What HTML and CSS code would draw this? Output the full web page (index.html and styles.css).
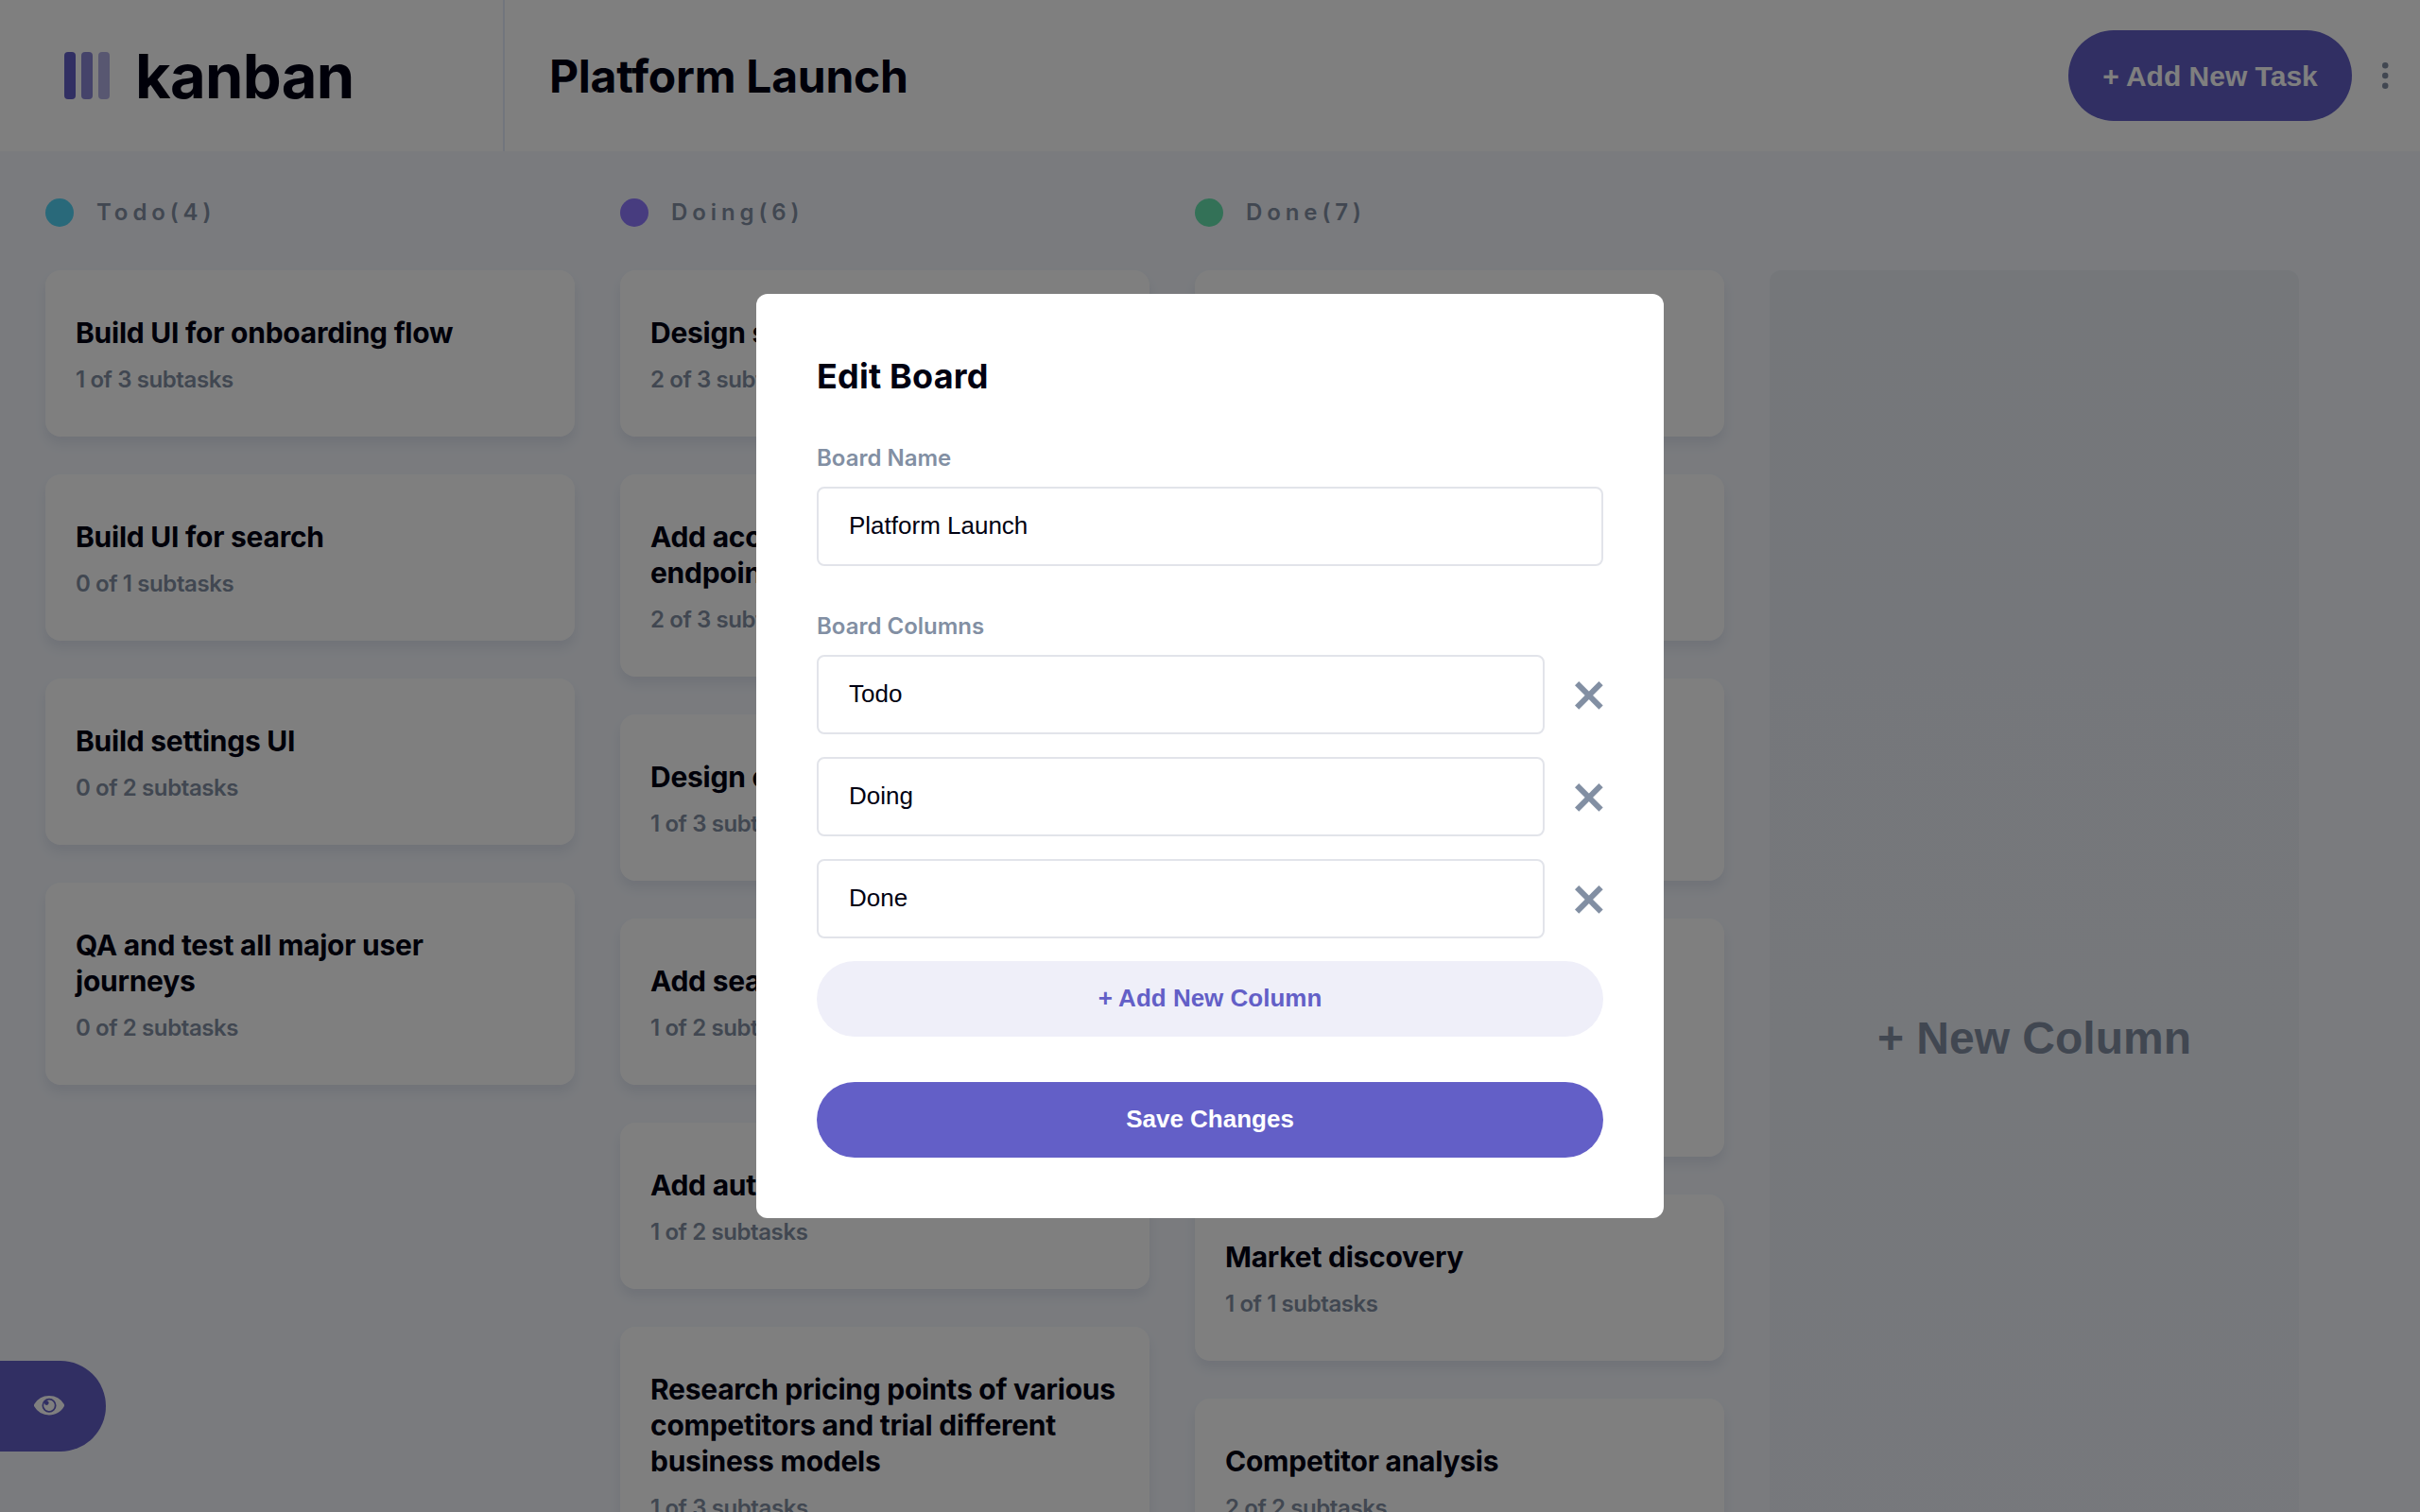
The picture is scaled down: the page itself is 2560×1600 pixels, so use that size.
FILE: index.html
```html
<!DOCTYPE html>
<html lang="en">
<head>
    <meta charset="UTF-8">
    <meta name="viewport" content="width=device-width, initial-scale=1.0">
    <title>Kanban</title>
    <link rel="stylesheet" href="styles.css">
</head>

<body>
    <header class="topbar">
        <div class="brand">
            <svg class="logo" width="48" height="50" viewBox="0 0 24 25">
                <rect width="6" height="25" rx="2" fill="#635FC7"/>
                <rect x="9" width="6" height="25" rx="2" fill="#635FC7" opacity=".75"/>
                <rect x="18" width="6" height="25" rx="2" fill="#635FC7" opacity=".5"/>
            </svg>
            <span class="brand-name">kanban</span>
        </div>
        <h1 class="board-title">Platform Launch</h1>
        <button class="add-task">+ Add New Task</button>
        <svg class="more" width="7" height="30" viewBox="0 0 5 20">
            <g fill="#828FA3">
                <circle cx="2.308" cy="2.308" r="2.308"/>
                <circle cx="2.308" cy="10" r="2.308"/>
                <circle cx="2.308" cy="17.692" r="2.308"/>
            </g>
        </svg>
    </header>

    <main class="board">
        <div class="columns">
            <section class="column">
                <h2 class="column-title"><span class="dot dot-todo"></span>Todo(4)</h2>
                <article class="card"><h3>Build UI for onboarding flow</h3><p>1 of 3 subtasks</p></article>
                <article class="card"><h3>Build UI for search</h3><p>0 of 1 subtasks</p></article>
                <article class="card"><h3>Build settings UI</h3><p>0 of 2 subtasks</p></article>
                <article class="card"><h3>QA and test all major user journeys</h3><p>0 of 2 subtasks</p></article>
            </section>

            <section class="column">
                <h2 class="column-title"><span class="dot dot-doing"></span>Doing(6)</h2>
                <article class="card"><h3>Design settings and search pages</h3><p>2 of 3 subtasks</p></article>
                <article class="card"><h3>Add account management endpoints</h3><p>2 of 3 subtasks</p></article>
                <article class="card"><h3>Design onboarding flow</h3><p>1 of 3 subtasks</p></article>
                <article class="card"><h3>Add search endpoints</h3><p>1 of 2 subtasks</p></article>
                <article class="card"><h3>Add authentication endpoints</h3><p>1 of 2 subtasks</p></article>
                <article class="card"><h3>Research pricing points of various competitors and trial different business models</h3><p>1 of 3 subtasks</p></article>
            </section>

            <section class="column">
                <h2 class="column-title"><span class="dot dot-done"></span>Done(7)</h2>
                <article class="card"><h3>Conduct 5 wireframe tests</h3><p>1 of 1 subtasks</p></article>
                <article class="card"><h3>Create wireframe prototype</h3><p>1 of 1 subtasks</p></article>
                <article class="card"><h3>Review results of usability tests and iterate</h3><p>3 of 3 subtasks</p></article>
                <article class="card"><h3>Create paper prototypes and conduct 10 usability tests with potential customers</h3><p>1 of 1 subtasks</p></article>
                <article class="card"><h3>Market discovery</h3><p>1 of 1 subtasks</p></article>
                <article class="card"><h3>Competitor analysis</h3><p>2 of 2 subtasks</p></article>
                <article class="card"><h3>Research the market</h3><p>2 of 2 subtasks</p></article>
            </section>

            <div class="new-column">+ New Column</div>
        </div>
    </main>

    <button class="show-sidebar">
        <svg width="32" height="22" viewBox="0 0 16 11">
            <path d="M15.815 4.434A9.055 9.055 0 0 0 8 0 9.055 9.055 0 0 0 .185 4.434a1.333 1.333 0 0 0 0 1.354A9.055 9.055 0 0 0 8 10.222c3.33 0 6.25-1.777 7.815-4.434a1.333 1.333 0 0 0 0-1.354ZM8 8.89A3.776 3.776 0 0 1 4.222 5.11 3.776 3.776 0 0 1 8 1.333a3.776 3.776 0 0 1 3.778 3.778A3.776 3.776 0 0 1 8 8.89Zm2.889-3.778a2.889 2.889 0 1 1-5.438-1.36 1.19 1.19 0 1 0 1.19-1.189H6.64a2.889 2.889 0 0 1 4.25 2.549Z" fill="#FFF"/>
        </svg>
    </button>

    <div class="overlay">
        <form class="modal">
            <h2 class="modal-title">Edit Board</h2>

            <label class="field-label">Board Name</label>
            <input class="field" value="Platform Launch"/>

            <label class="field-label field-label-columns">Board Columns</label>
            <div class="column-rows">
                <div class="column-row">
                    <input class="field" value="Todo"/>
                    <svg class="cross" width="30" height="30" viewBox="0 0 15 15">
                        <g fill="#828FA3"><path d="m12.728 0 2.122 2.122L2.122 14.85 0 12.728z"/><path d="M0 2.122 2.122 0 14.85 12.728l-2.122 2.122z"/></g>
                    </svg>
                </div>
                <div class="column-row">
                    <input class="field" value="Doing"/>
                    <svg class="cross" width="30" height="30" viewBox="0 0 15 15">
                        <g fill="#828FA3"><path d="m12.728 0 2.122 2.122L2.122 14.85 0 12.728z"/><path d="M0 2.122 2.122 0 14.85 12.728l-2.122 2.122z"/></g>
                    </svg>
                </div>
                <div class="column-row">
                    <input class="field" value="Done"/>
                    <svg class="cross" width="30" height="30" viewBox="0 0 15 15">
                        <g fill="#828FA3"><path d="m12.728 0 2.122 2.122L2.122 14.85 0 12.728z"/><path d="M0 2.122 2.122 0 14.85 12.728l-2.122 2.122z"/></g>
                    </svg>
                </div>
                <button type="button" class="pill pill-light">+ Add New Column</button>
            </div>

            <button type="button" class="pill pill-primary">Save Changes</button>
        </form>
    </div>
</body>
</html>
```

FILE: styles.css
```css
* {
    box-sizing: border-box;
}

html, body {
    height: 100%;
}

body {
    margin: 0;
    overflow: hidden;
    background-color: #F4F7FD;
    color: #000112;
    font-family: "Inter", "Liberation Sans", sans-serif;
}

button {
    border: none;
    cursor: pointer;
}

.topbar {
    display: flex;
    align-items: center;
    height: 160px;
    padding-right: 33px;
    background-color: #fff;
}

.brand {
    display: flex;
    align-items: center;
    gap: 27px;
    align-self: stretch;
    width: 534px;
    padding-left: 68px;
    border-right: 2px solid #E4EBFA;
}

.logo {
    flex: none;
}

.brand-name {
    font-size: 65px;
    font-weight: 700;
    line-height: 1;
    letter-spacing: -0.7px;
}

.board-title {
    flex: 1;
    margin: 0 0 0 47px;
    font-size: 48px;
    font-weight: 700;
    letter-spacing: -0.25px;
}

.add-task {
    height: 96px;
    width: 300px;
    padding: 2px 0 0;
    border-radius: 48px;
    background-color: #635FC7;
    color: #fff;
    font-family: "Liberation Sans", sans-serif;
    font-size: 30px;
    font-weight: 700;
}

.more {
    margin-left: 32px;
}

.board {
    height: 1440px;
    overflow: hidden;
    padding: 46px 0 0 48px;
}

.columns {
    display: flex;
    gap: 48px;
}

.column {
    width: 560px;
    flex: none;
    display: flex;
    flex-direction: column;
    gap: 40px;
    padding-bottom: 38px;
}

.column-title {
    display: flex;
    align-items: center;
    gap: 24px;
    height: 36px;
    margin: 0 0 4px;
    color: #828FA3;
    font-size: 24px;
    font-weight: 600;
    letter-spacing: 4.9px;
}

.dot {
    width: 30px;
    height: 30px;
    margin-top: 2px;
    border-radius: 50%;
}

.dot-todo {
    background-color: #52D2F5;
}

.dot-doing {
    background-color: #8E78FF;
}

.dot-done {
    background-color: #67E2AE;
}

.card {
    padding: 47px 32px 45px;
    border-radius: 16px;
    background-color: #fff;
    box-shadow: 0 8px 12px rgba(54, 78, 126, 0.1);
}

.card h3 {
    margin: 0;
    font-size: 30px;
    font-weight: 700;
    line-height: 38px;
    letter-spacing: -0.25px;
}

.card p {
    margin: 16px 0 0;
    color: #828FA3;
    font-size: 24px;
    font-weight: 600;
    line-height: 30px;
    letter-spacing: -0.4px;
}

.new-column {
    width: 560px;
    flex: none;
    display: flex;
    align-items: center;
    justify-content: center;
    margin-top: 80px;
    border-radius: 12px;
    background: linear-gradient(180deg, #EAEEF5 0%, rgba(233, 237, 245, 0.5) 100%);
    color: #828FA3;
    font-family: "Liberation Sans", sans-serif;
    font-size: 48px;
    font-weight: 700;
}

.show-sidebar {
    position: absolute;
    left: 0;
    bottom: 64px;
    width: 112px;
    height: 96px;
    display: flex;
    align-items: center;
    justify-content: center;
    padding: 0 8px 0 0;
    border-radius: 0 48px 48px 0;
    background-color: #635FC7;
}

.overlay {
    position: fixed;
    inset: 0;
    display: flex;
    align-items: center;
    justify-content: center;
    background-color: rgba(0, 0, 0, 0.5);
}

.modal {
    display: flex;
    flex-direction: column;
    width: 960px;
    padding: 64px;
    border-radius: 12px;
    background-color: #fff;
}

.modal-title {
    margin: 0 0 48px;
    font-size: 36px;
    font-weight: 700;
    line-height: 46px;
    letter-spacing: 0.2px;
}

.field-label {
    position: relative;
    top: 1px;
    margin-bottom: 16px;
    color: #828FA3;
    font-size: 24px;
    font-weight: 600;
    line-height: 30px;
}

.field-label-columns {
    margin-top: 48px;
}

.field {
    width: 100%;
    height: 84px;
    padding: 0 32px 2px;
    border: 2px solid #E2E4EA;
    border-radius: 8px;
    color: #000112;
    font-family: "Liberation Sans", sans-serif;
    font-size: 26px;
}

.column-rows {
    display: flex;
    flex-direction: column;
    gap: 24px;
}

.column-row {
    display: flex;
    align-items: center;
    gap: 32px;
}

.cross {
    flex: none;
    margin-top: 2px;
}

.pill {
    width: 100%;
    height: 80px;
    padding: 0 0 2px;
    border-radius: 40px;
    font-family: "Liberation Sans", sans-serif;
    font-size: 26px;
    font-weight: 700;
}

.pill-light {
    background-color: #EFEFF9;
    color: #635FC7;
}

.pill-primary {
    margin-top: 48px;
    background-color: #635FC7;
    color: #fff;
}
```
